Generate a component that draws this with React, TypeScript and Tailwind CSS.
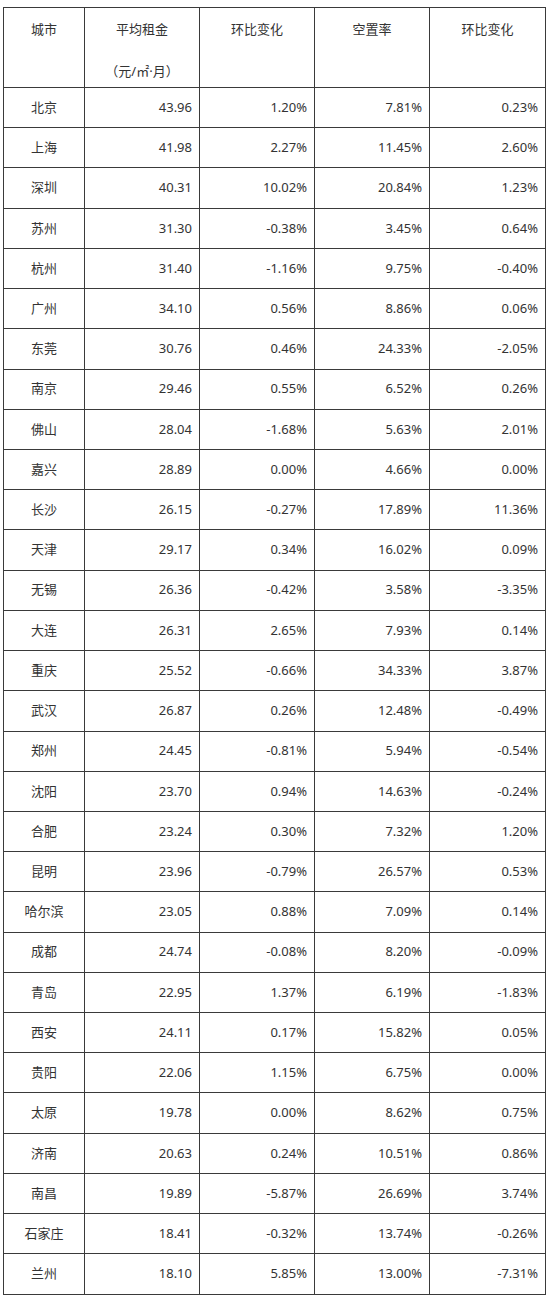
import React from "react"

const rows: [string, string, string, string, string][] = [
  ["北京", "43.96", "1.20%", "7.81%", "0.23%"],
  ["上海", "41.98", "2.27%", "11.45%", "2.60%"],
  ["深圳", "40.31", "10.02%", "20.84%", "1.23%"],
  ["苏州", "31.30", "-0.38%", "3.45%", "0.64%"],
  ["杭州", "31.40", "-1.16%", "9.75%", "-0.40%"],
  ["广州", "34.10", "0.56%", "8.86%", "0.06%"],
  ["东莞", "30.76", "0.46%", "24.33%", "-2.05%"],
  ["南京", "29.46", "0.55%", "6.52%", "0.26%"],
  ["佛山", "28.04", "-1.68%", "5.63%", "2.01%"],
  ["嘉兴", "28.89", "0.00%", "4.66%", "0.00%"],
  ["长沙", "26.15", "-0.27%", "17.89%", "11.36%"],
  ["天津", "29.17", "0.34%", "16.02%", "0.09%"],
  ["无锡", "26.36", "-0.42%", "3.58%", "-3.35%"],
  ["大连", "26.31", "2.65%", "7.93%", "0.14%"],
  ["重庆", "25.52", "-0.66%", "34.33%", "3.87%"],
  ["武汉", "26.87", "0.26%", "12.48%", "-0.49%"],
  ["郑州", "24.45", "-0.81%", "5.94%", "-0.54%"],
  ["沈阳", "23.70", "0.94%", "14.63%", "-0.24%"],
  ["合肥", "23.24", "0.30%", "7.32%", "1.20%"],
  ["昆明", "23.96", "-0.79%", "26.57%", "0.53%"],
  ["哈尔滨", "23.05", "0.88%", "7.09%", "0.14%"],
  ["成都", "24.74", "-0.08%", "8.20%", "-0.09%"],
  ["青岛", "22.95", "1.37%", "6.19%", "-1.83%"],
  ["西安", "24.11", "0.17%", "15.82%", "0.05%"],
  ["贵阳", "22.06", "1.15%", "6.75%", "0.00%"],
  ["太原", "19.78", "0.00%", "8.62%", "0.75%"],
  ["济南", "20.63", "0.24%", "10.51%", "0.86%"],
  ["南昌", "19.89", "-5.87%", "26.69%", "3.74%"],
  ["石家庄", "18.41", "-0.32%", "13.74%", "-0.26%"],
  ["兰州", "18.10", "5.85%", "13.00%", "-7.31%"],
]

const cell = "border border-[#3a3a3a] px-[7px]"

export default function App() {
  return (
    <main
      className="min-h-[1312px] w-[550px] bg-white pl-[3px] pt-[7px] text-[13px] text-[#333]"
      style={{ fontFamily: '"Noto Sans", "Noto Sans CJK SC", sans-serif' }}
    >
      <table className="w-[542px] table-fixed border-collapse">
        <colgroup>
          <col className="w-[81px]" />
          <col className="w-[115px]" />
          <col className="w-[115px]" />
          <col className="w-[115px]" />
          <col className="w-[116px]" />
        </colgroup>
        <thead>
          <tr className="h-[80px]">
            <th className={`${cell} pt-[11px] align-top font-normal`}>
              <div className="leading-[20px]">城市</div>
            </th>
            <th className={`${cell} pt-[11px] align-top font-normal`}>
              <div className="leading-[20px]">平均租金</div>
              <div className="mt-[22px] leading-[20px]">（元/㎡·月）</div>
            </th>
            <th className={`${cell} pt-[11px] align-top font-normal`}>
              <div className="leading-[20px]">环比变化</div>
            </th>
            <th className={`${cell} pt-[11px] align-top font-normal`}>
              <div className="leading-[20px]">空置率</div>
            </th>
            <th className={`${cell} pt-[11px] align-top font-normal`}>
              <div className="leading-[20px]">环比变化</div>
            </th>
          </tr>
        </thead>
        <tbody>
          {rows.map((r) => (
            <tr key={r[0]} className="h-[40.23px]">
              <td className={`${cell} text-center`}>{r[0]}</td>
              <td className={`${cell} text-right`}>{r[1]}</td>
              <td className={`${cell} text-right`}>{r[2]}</td>
              <td className={`${cell} text-right`}>{r[3]}</td>
              <td className={`${cell} text-right`}>{r[4]}</td>
            </tr>
          ))}
        </tbody>
      </table>
    </main>
  )
}
